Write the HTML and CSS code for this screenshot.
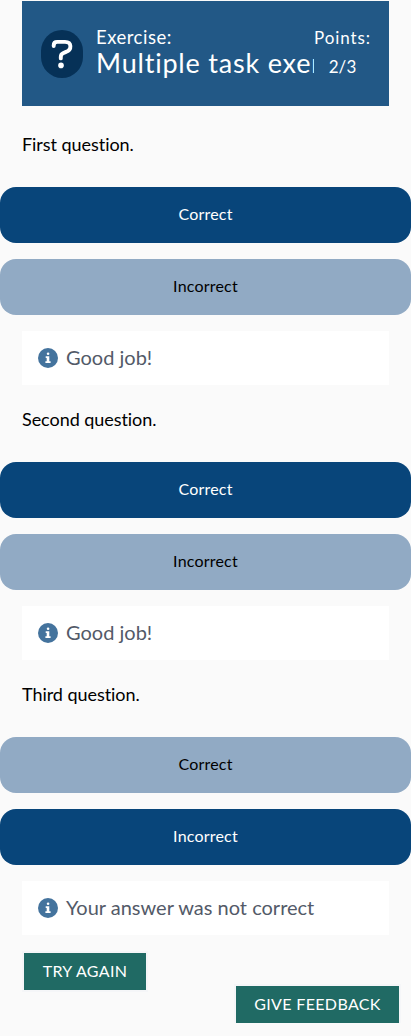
FILE: index.html
```
<!DOCTYPE html>
<html lang="en">
<head>
<meta charset="utf-8">
<title>Multiple task exercise</title>
<link rel="stylesheet" href="styles.css">
</head>
<body>
<svg class="symbols" aria-hidden="true">
  <symbol id="info" viewBox="0 0 20 20">
    <circle cx="10" cy="10" r="10" fill="#44739d"/>
    <path d="M7.7 8.3h3.6v5h1.3v1.8H7.4v-1.8h1.3v-3.2h-1z" fill="#fff"/>
    <circle cx="10.1" cy="5.8" r="1.3" fill="#fff"/>
  </symbol>
</svg>
<header class="header">
  <svg class="help" viewBox="0 0 42 48">
    <rect width="42" height="48" rx="21" fill="#063157"/>
    <path d="M12.7 16v-.6q0-3.5 3.5-3.5H24c7 0 7 8 1 10l-3 1.4q-2.2 1-2.2 3.7v1.4" fill="none" stroke="#fff" stroke-width="3.9" stroke-linecap="round"/>
    <circle cx="20" cy="35.4" r="2.8" fill="#fff"/>
  </svg>
  <div class="heading">
    <div class="kind"><span class="kind-text">Exercise:</span></div>
    <h1 class="title">Multiple task exercise</h1>
  </div>
  <div class="points"><span class="points-label">Points:</span><span class="score">2/3</span></div>
</header>
<main>
  <section class="task">
    <p class="question">First question.</p>
    <div class="options"><button class="option selected">Correct</button><button class="option">Incorrect</button></div>
    <div class="feedback"><svg class="info"><use href="#info"/></svg><span>Good job!</span></div>
  </section>
  <section class="task">
    <p class="question">Second question.</p>
    <div class="options"><button class="option selected">Correct</button><button class="option">Incorrect</button></div>
    <div class="feedback"><svg class="info"><use href="#info"/></svg><span>Good job!</span></div>
  </section>
  <section class="task">
    <p class="question">Third question.</p>
    <div class="options"><button class="option">Correct</button><button class="option selected">Incorrect</button></div>
    <div class="feedback"><svg class="info"><use href="#info"/></svg><span>Your answer was not correct</span></div>
  </section>
</main>
<footer class="actions">
  <button class="action retry">TRY AGAIN</button>
  <button class="action give">GIVE FEEDBACK</button>
</footer>
</body>
</html>
```
FILE: styles.css
```
* { box-sizing: border-box; }
body { margin: 0; padding-top: 1px; background: #fafafa; color: #000; font-family: Lato, sans-serif; font-variant-ligatures: none; overflow: hidden; }
button { border: 0; font-family: inherit; }
.symbols { display: none; }
.header { display: flex; align-items: flex-start; height: 105px; margin: 0 22px 4px; padding: 24px 16px 0 19px; background: #225886; color: #fff; }
.help { flex: none; width: 42px; height: 48px; margin: 5px 13px 0 0; }
.heading { flex: none; width: 218px; overflow: hidden; white-space: nowrap; }
.kind { height: 24px; font-size: 18.5px; line-height: 24px; letter-spacing: .5px; }
.title { margin: 0; font-size: 27px; line-height: 28px; height: 36px; font-weight: 400; letter-spacing: .8px; }
.points { flex: none; display: flex; flex-direction: column; align-items: center; width: 57px; padding-top: 1px; font-size: 17px; line-height: 24px; letter-spacing: .9px; }
.score { margin-top: 5px; letter-spacing: .1px; }
.question { display: flex; align-items: center; height: 77px; margin: 0; padding: 0 22px 8px; font-size: 18px; line-height: 27px; letter-spacing: -.05px; }
.options { display: grid; gap: 16px; }
.option { height: 56px; padding: 0 0 3px; border-radius: 16px; background: #91aac4; color: #000; font-size: 16px; letter-spacing: .2px; }
.option.selected { background: #08457a; color: #fff; }
.feedback { display: flex; align-items: center; gap: 8px; height: 54px; margin: 16px 22px 0; padding: 0 16px; background: #fff; color: #535a68; font-size: 20px; }
.feedback span { padding-bottom: 2px; }
.info { width: 20px; height: 20px; }
.actions { display: flex; flex-direction: column; padding: 18px 12px 0 24px; }
.action { height: 37px; padding: 0 0 2px; background: #206a64; color: #fff; font-size: 16px; letter-spacing: .35px; box-shadow: 0 0 0 2px #f5f6f8; }
.retry { width: 122px; }
.give { align-self: flex-end; width: 163px; margin-top: -4px; }
```
